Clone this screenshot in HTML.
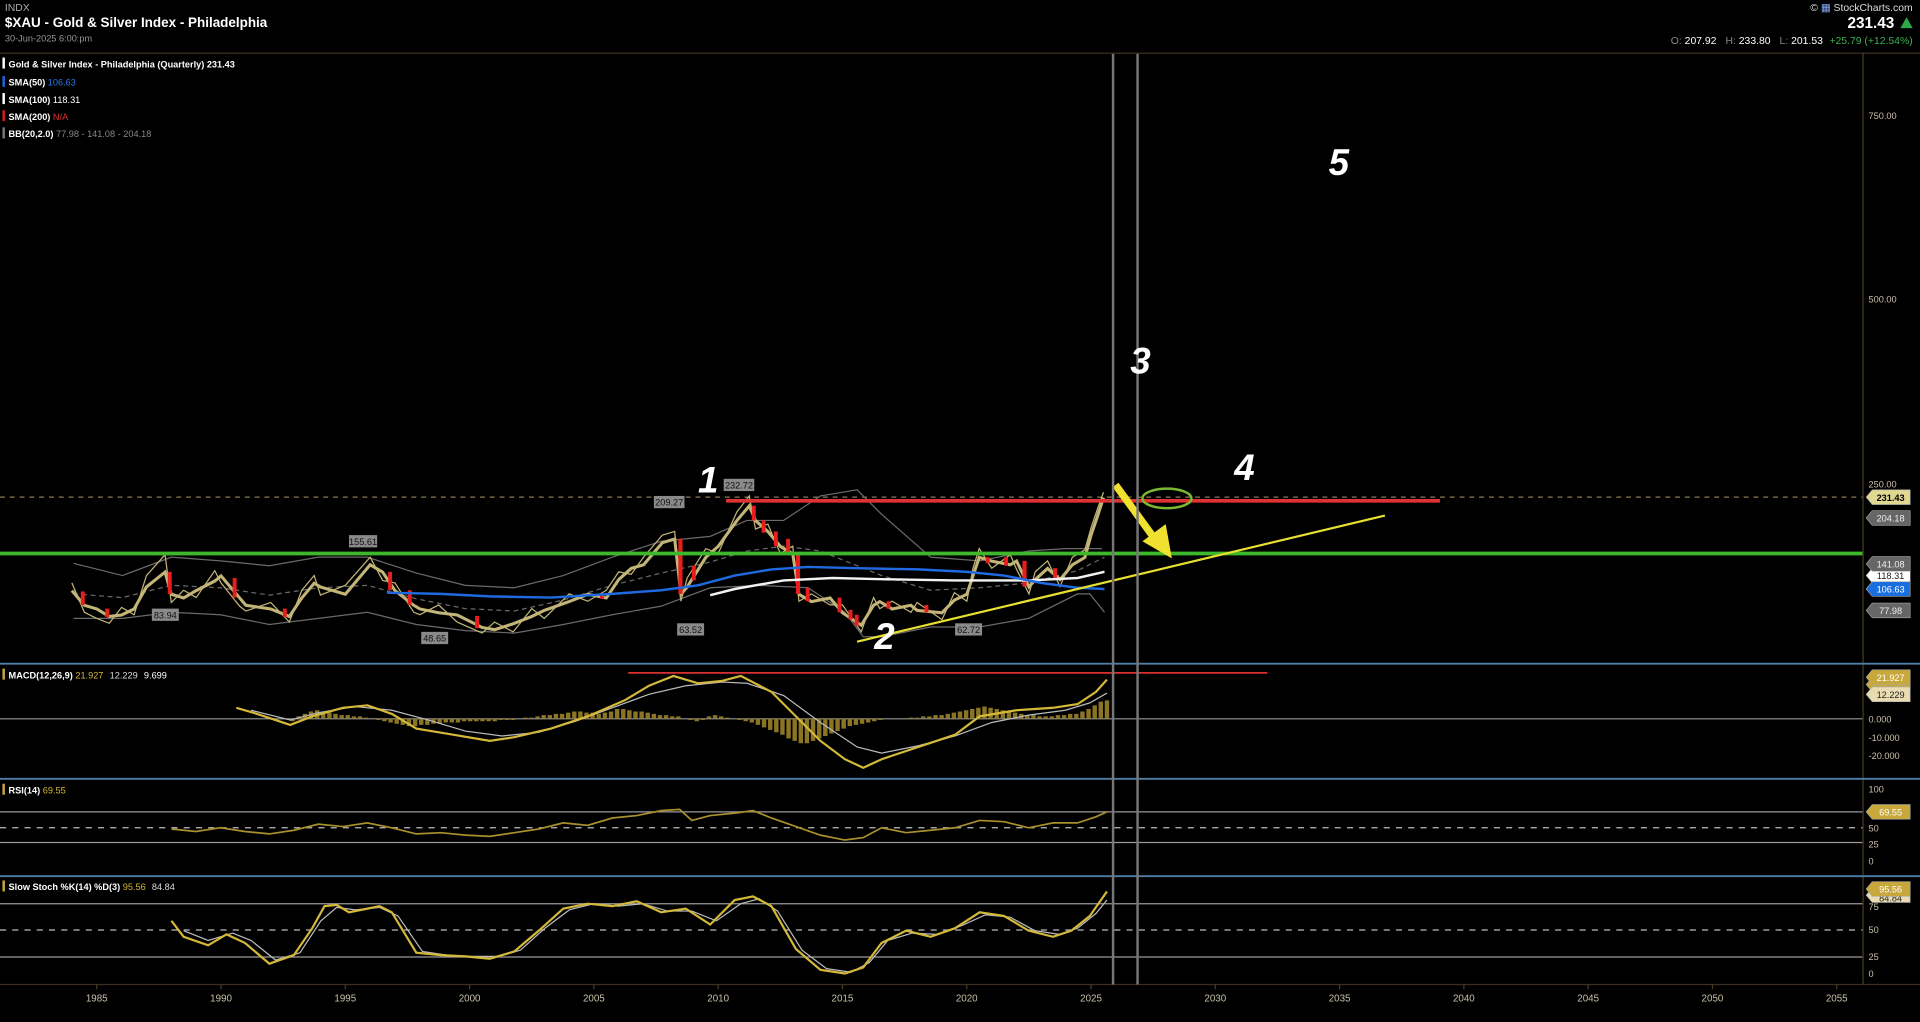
<!DOCTYPE html>
<html><head><meta charset="utf-8"><style>
html,body{margin:0;padding:0;background:#000;overflow:hidden}
svg{display:block}
text{font-family:"Liberation Sans",sans-serif}
</style></head><body>
<svg width="1920" height="1022" viewBox="0 0 1568 834.6" preserveAspectRatio="none" xmlns="http://www.w3.org/2000/svg">
<rect width="1568" height="835" fill="#000"/>
<text x="4" y="9" font-size="8.5" fill="#aaa">INDX</text>
<text x="4" y="22" font-size="11" font-weight="bold" fill="#fff">$XAU - Gold &amp; Silver Index - Philadelphia</text>
<text x="4" y="34" font-size="7.5" fill="#999">30-Jun-2025 6:00:pm</text>
<line x1="0" y1="43.5" x2="1568" y2="43.5" stroke="#3d3020"/>
<line x1="1521.5" y1="43" x2="1521.5" y2="804" stroke="#4a3c22"/>
<line x1="0" y1="804" x2="1568" y2="804" stroke="#3d3020"/>
<g font-size="7.5" font-weight="bold" fill="#fff">
<rect x="2" y="47" width="2" height="9" fill="#fff"/><text x="7" y="55">Gold &amp; Silver Index - Philadelphia (Quarterly) 231.43</text>
<rect x="2" y="62" width="2" height="9" fill="#1a66e0"/><text x="7" y="70">SMA(50) <tspan fill="#2a7ae8" font-weight="normal">106.63</tspan></text>
<rect x="2" y="76" width="2" height="9" fill="#fff"/><text x="7" y="84">SMA(100) <tspan font-weight="normal">118.31</tspan></text>
<rect x="2" y="90" width="2" height="9" fill="#d02020"/><text x="7" y="98">SMA(200) <tspan fill="#e03030" font-weight="normal">N/A</tspan></text>
<rect x="2" y="104" width="2" height="9" fill="#777"/><text x="7" y="112">BB(20,2.0) <tspan fill="#888" font-weight="normal">77.98 - 141.08 - 204.18</tspan></text>
</g>
<text x="1562" y="9" font-size="8.5" fill="#ddd" text-anchor="end">© <tspan fill="#8af">▦</tspan> StockCharts.com</text>
<text x="1547" y="23" font-size="12.5" font-weight="bold" fill="#fff" text-anchor="end">231.43</text>
<polygon points="1552,23 1562,23 1557,14" fill="#2fa84a"/>
<text x="1562" y="36" font-size="8.5" fill="#fff" text-anchor="end"><tspan fill="#888">O:</tspan> 207.92 <tspan dx="5" fill="#888">H:</tspan> 233.80 <tspan dx="5" fill="#888">L:</tspan> 201.53 <tspan dx="3" fill="#3cb050">+25.79 (+12.54%)</tspan></text>

<g stroke="#4f7ea6" stroke-width="1.5">
<line x1="0" y1="542" x2="1568" y2="542"/><line x1="0" y1="636" x2="1568" y2="636"/><line x1="0" y1="715.5" x2="1568" y2="715.5"/>
</g>
<g stroke="#999">
<line x1="0" y1="587" x2="1521" y2="587"/>
<line x1="0" y1="663" x2="1521" y2="663"/><line x1="0" y1="688" x2="1521" y2="688"/>
<line x1="0" y1="738" x2="1521" y2="738"/><line x1="0" y1="781.5" x2="1521" y2="781.5"/>
</g>
<g stroke="#bbb" stroke-dasharray="5,5">
<line x1="0" y1="676" x2="1521" y2="676"/><line x1="0" y1="759.5" x2="1521" y2="759.5"/>
</g>
<line x1="0" y1="406" x2="1521" y2="406" stroke="#8a7a50" stroke-dasharray="4,4"/>

<!-- Bollinger -->
<g fill="none" stroke="#6a6a6a" stroke-width="1">
<polyline points="60,460 100,470 140,455 180,458 220,462 260,455 300,455 340,468 380,478 420,480 460,470 500,455 540,442 580,438 610,425 640,425 670,405 700,400 720,420 760,455 800,458 840,450 870,448 900,448"/>
<polyline points="60,505 100,505 140,500 180,502 220,510 260,505 300,500 340,510 380,515 420,517 460,510 500,502 540,495 580,480 620,478 660,480 690,500 705,520 720,520 760,512 800,512 840,505 880,485 890,485 902,500"/>
<polyline stroke-dasharray="4,3" points="60,485 100,488 140,478 180,480 220,486 260,480 300,478 340,489 380,497 420,499 460,490 500,478 540,468 580,459 610,450 640,446 670,450 700,462 720,470 760,482 800,480 840,476 880,466 902,455"/>
</g>
<!-- price: wicks + close line -->
<polyline fill="none" stroke="#c2b577" stroke-width="1" points="58.7,476 68.9,500 79,505 89.2,509 99.3,496 109.5,502 119.6,470 134.8,453 139.9,492 150,482 160.2,488 175.4,466 180.5,476 195.7,495 200.8,499 221.1,492 236.3,508 246.5,482 256.6,470 261.7,486 282,478 302.3,455 312.5,474 322.6,476 337.9,500 342.9,502 358.2,494 373.4,508 393.7,517 403.9,508 419.1,516 434.3,497 444.5,505 464.8,485 480,491 495.2,482 505.3,467 515.5,469 525.6,455 540.9,437 551,434 556.1,491 561.2,472 576.4,448 586.5,452 601.8,418 611.9,405 617,432 627.1,428 637.3,452 647.4,446 652.5,491 662.7,485 677.9,494 688,494 703.3,516 713.4,488 718.5,497 728.6,491 743.9,500 749,492 769.3,506 779.4,484 789.6,491 794.6,464 799.7,448 809.9,464 825.1,453 830.2,465 840.3,485 845.4,467 855.5,458 865.7,479 875.8,455 886,449 891,431 896.1,416 901.2,402"/>
<polyline fill="none" stroke="#c2b577" stroke-width="2.5" points="58.7,482.3 68.9,494.3 79,497.3 89.2,503.4 99.3,502.2 109.5,497.3 119.6,479.3 134.8,467.2 139.9,485.3 150,488.3 160.2,482.3 175.4,474.5 180.5,470.3 195.7,488.3 200.8,494.3 221.1,497.3 236.3,503.4 246.5,488.3 256.6,476.3 261.7,479.3 282,485.3 302.3,461.2 312.5,467.2 322.6,482.3 337.9,494.3 342.9,497.3 358.2,500.4 373.4,502.2 393.7,512.4 403.9,514.2 419.1,509.4 434.3,503.4 444.5,498.5 464.8,491.3 480,485.3 495.2,488.3 505.3,473.3 515.5,464.2 525.6,461.2 540.9,443.2 551,440.2 556.1,485.3 561.2,479.3 576.4,455.2 586.5,446.2 601.8,425.1 611.9,413.1 617,425.1 627.1,434.1 637.3,446.2 647.4,452.2 652.5,485.3 662.7,491.3 677.9,488.3 688,500.4 703.3,510.6 713.4,494.3 718.5,491.3 728.6,497.3 743.9,494.3 749,498.5 769.3,500.4 779.4,490.1 789.6,485.3 794.6,470.3 799.7,455.2 809.9,458.2 825.1,461.2 830.2,458.2 840.3,479.3 845.4,473.3 855.5,464.2 865.7,473.3 875.8,461.2 886,455.2 891,437.1 896.1,422.1 901.2,406.4"/>
<g fill="#e81e1e">
<rect x="66" y="483" width="3.2" height="11"/><rect x="86" y="497" width="3.2" height="7"/><rect x="137" y="467" width="3.2" height="18"/>
<rect x="190" y="472" width="3.2" height="16"/><rect x="231" y="497" width="3.2" height="7"/><rect x="317" y="467" width="3.2" height="15"/>
<rect x="333" y="482" width="3.2" height="12"/><rect x="388" y="503" width="3.2" height="10"/><rect x="490" y="485" width="3.2" height="4"/>
<rect x="554" y="440" width="3.4" height="45"/><rect x="565" y="462" width="3.2" height="12"/><rect x="614" y="413" width="3.2" height="12"/>
<rect x="622" y="425" width="3.2" height="10"/><rect x="632" y="434" width="3.2" height="12"/><rect x="642" y="440" width="3.2" height="12"/>
<rect x="650" y="452" width="3.4" height="33"/><rect x="658" y="480" width="3.2" height="11"/><rect x="684" y="488" width="3.2" height="12"/>
<rect x="693" y="498" width="3.2" height="8"/><rect x="698" y="502" width="3.2" height="9"/><rect x="724" y="491" width="3.2" height="6"/>
<rect x="755" y="494" width="3.2" height="6"/><rect x="805" y="455" width="3.2" height="5"/><rect x="820" y="455" width="3.2" height="7"/>
<rect x="835" y="458" width="3.4" height="21"/><rect x="860" y="464" width="3.2" height="9"/>
</g>
<polyline fill="none" stroke="#f2f2f2" stroke-width="2" points="580,486 600,481 640,474 680,472 720,473 780,474 840,474 880,472 902,467"/>
<polyline fill="none" stroke="#1f6ae0" stroke-width="2" points="316,484 360,485 400,487 450,488 500,485 540,482 570,478 600,470 630,465 660,463 700,464 750,465 790,467 820,470 850,476 880,480 902,481"/>

<!-- MACD -->
<path fill="none" stroke="#8a7525" stroke-width="3.6" d="M239 587v2M244 587v-2M249 587v-4M254 587v-6M259 587v-7M264 587v-6M269 587v-5M274 587v-4M279 587v-3M284 587v-3M289 587v-2M294 587v-2M299 587v-1M309 587v1M314 587v2M319 587v3M324 587v4M329 587v5M334 587v6M339 587v6M344 587v5M349 587v5M354 587v4M359 587v4M364 587v3M369 587v3M374 587v3M379 587v2M384 587v2M389 587v2M394 587v2M399 587v2M404 587v2M409 587v1M414 587v1M419 587v1M429 587v-1M434 587v-1M439 587v-2M444 587v-3M449 587v-3M454 587v-4M459 587v-4M464 587v-5M469 587v-6M474 587v-6M479 587v-5M484 587v-5M489 587v-4M494 587v-5M499 587v-6M504 587v-8M509 587v-8M514 587v-7M519 587v-6M524 587v-6M529 587v-5M534 587v-4M539 587v-3M544 587v-3M549 587v-2M554 587v-2M564 587v1M569 587v2M574 587v1M579 587v-2M584 587v-3M589 587v-2M594 587v-1M604 587v1M609 587v2M614 587v3M619 587v5M624 587v7M629 587v9M634 587v11M639 587v13M644 587v16M649 587v18M654 587v20M659 587v20M664 587v18M669 587v16M674 587v14M679 587v12M684 587v10M689 587v8M694 587v6M699 587v5M704 587v4M709 587v3M714 587v2M719 587v1M744 587v-1M749 587v-1M754 587v-2M759 587v-2M764 587v-3M769 587v-3M774 587v-4M779 587v-5M784 587v-6M789 587v-7M794 587v-8M799 587v-9M804 587v-10M809 587v-9M814 587v-8M819 587v-7M824 587v-6M829 587v-5M834 587v-4M839 587v-3M844 587v-3M849 587v-2M854 587v-2M859 587v-2M864 587v-3M869 587v-3M874 587v-4M879 587v-4M884 587v-6M889 587v-8M894 587v-11M899 587v-14M904 587v-15"/>
<polyline fill="none" stroke="#bbb" stroke-width="1" points="205,580 237,588 260,582 290,577 320,580 350,588 380,597 410,601 440,598 470,589 500,578 530,567 560,560 590,557 610,558 640,568 670,590 700,610 720,615 750,609 780,601 810,590 840,584 870,580 890,574 904,566"/>
<polyline fill="none" stroke="#d4b83a" stroke-width="1.8" points="193,578 210,583 237,592 255,585 280,578 300,576 320,583 340,595 370,600 400,605 420,602 450,595 480,585 510,572 530,560 550,552 570,558 590,556 605,552 630,565 650,585 670,605 690,620 705,627 720,620 750,610 780,600 800,585 830,580 860,578 880,575 895,565 904,555"/>

<!-- RSI -->
<polyline fill="none" stroke="#a8902c" stroke-width="1.4" points="140,677 160,679 180,676 200,679 220,681 240,678 260,673 280,675 300,672 320,676 340,681 360,680 380,682 400,683 420,680 440,677 460,672 480,674 500,668 520,666 540,662 555,661 565,670 580,666 600,664 615,662 630,668 650,675 670,682 690,686 705,684 720,676 740,680 760,678 780,676 800,670 820,671 840,676 860,672 880,672 895,667 904,663"/>
<!-- Stoch -->
<polyline fill="none" stroke="#bbb" stroke-width="1" points="150,760 170,768 190,762 205,768 225,784 245,778 262,752 275,741 290,743 310,741 325,748 345,777 365,780 385,781 405,781 425,776 445,758 465,743 485,738 505,740 525,738 545,744 565,744 585,752 605,738 620,734 635,744 655,776 675,791 695,794 710,786 725,768 745,762 765,763 785,756 805,747 825,749 845,760 865,763 880,758 895,746 904,735"/>
<polyline fill="none" stroke="#d4b83a" stroke-width="1.8" points="140,752 150,765 170,772 185,763 200,770 220,787 240,780 255,758 265,740 275,739 285,745 300,742 310,740 320,745 340,778 360,780 380,781 400,783 420,777 440,760 460,742 480,738 500,740 520,736 540,745 560,742 580,755 600,735 615,732 630,740 650,775 670,792 690,795 705,790 720,770 740,760 760,765 780,758 800,745 820,748 840,760 860,765 875,760 890,748 904,728"/>

<!-- annotations -->
<line x1="0" y1="452" x2="1521" y2="452" stroke="#3cb82a" stroke-width="3"/>
<line x1="593" y1="409" x2="1176" y2="409" stroke="#e03232" stroke-width="3"/>
<line x1="513" y1="549.5" x2="1035" y2="549.5" stroke="#d83030" stroke-width="1.5"/>
<line x1="700" y1="524" x2="1131" y2="421" stroke="#e8e030" stroke-width="1.8"/>
<line x1="911" y1="396" x2="943" y2="440" stroke="#f0e030" stroke-width="6"/>
<polygon points="933,442 952,428 957,456" fill="#f0e030"/>
<ellipse cx="953" cy="407" rx="20" ry="8" fill="none" stroke="#7ab830" stroke-width="2"/>
<line x1="909" y1="44" x2="909" y2="804" stroke="#777" stroke-width="2"/>
<line x1="929" y1="44" x2="929" y2="804" stroke="#777" stroke-width="2"/>

<g font-size="30" font-weight="bold" font-style="italic" fill="#fff">
<text x="570" y="402">1</text><text x="714" y="530">2</text><text x="923" y="305">3</text><text x="1008" y="392">4</text><text x="1085" y="143">5</text>
</g>
<g font-size="7.5" fill="#111" text-anchor="middle">
<rect x="285" y="437" width="23" height="10" fill="#8a8a8a"/><text x="296.5" y="445">155.61</text>
<rect x="534" y="405" width="25" height="10" fill="#8a8a8a"/><text x="546.5" y="413">209.27</text>
<rect x="591" y="391" width="25" height="10" fill="#8a8a8a"/><text x="603.5" y="399">232.72</text>
<rect x="124" y="497" width="22" height="10" fill="#8a8a8a"/><text x="135" y="505">83.94</text>
<rect x="344" y="516" width="22" height="10" fill="#8a8a8a"/><text x="355" y="524">48.65</text>
<rect x="553" y="509" width="22" height="10" fill="#8a8a8a"/><text x="564" y="517">63.52</text>
<rect x="780" y="509" width="22" height="10" fill="#8a8a8a"/><text x="791" y="517">62.72</text>
</g>

<g font-size="7.5" font-weight="bold" fill="#fff">
<rect x="2" y="546" width="2" height="9" fill="#c8a83a"/><text x="7" y="554">MACD(12,26,9) <tspan fill="#d4b83a" font-weight="normal">21.927</tspan> <tspan fill="#ddd" font-weight="normal" dx="3">12.229</tspan> <tspan font-weight="normal" dx="3">9.699</tspan></text>
<rect x="2" y="640" width="2" height="9" fill="#c8a83a"/><text x="7" y="648">RSI(14) <tspan fill="#d4b83a" font-weight="normal">69.55</tspan></text>
<rect x="2" y="719" width="2" height="9" fill="#c8a83a"/><text x="7" y="727">Slow Stoch %K(14) %D(3) <tspan fill="#d4b83a" font-weight="normal">95.56</tspan> <tspan fill="#ddd" font-weight="normal" dx="3">84.84</tspan></text>
</g>

<g font-size="7.5" fill="#c8c0a8">
<text x="1526" y="97">750.00</text><text x="1526" y="247">500.00</text><text x="1526" y="398">250.00</text>
<text x="1526" y="590">0.000</text><text x="1526" y="605">-10.000</text><text x="1526" y="620">-20.000</text>
<text x="1526" y="647">100</text><text x="1526" y="679">50</text><text x="1526" y="692">25</text><text x="1526" y="706">0</text>
<text x="1526" y="743">75</text><text x="1526" y="762">50</text><text x="1526" y="784">25</text><text x="1526" y="798">0</text>
</g>

<!-- tags -->
<g font-size="7.5" text-anchor="middle" stroke-width="0.5">
<polygon points="1524,470 1529,464 1560,464 1560,476 1529,476" fill="#fff" stroke="#aaa"/><text x="1544" y="473" fill="#222">118.31</text>
<polygon points="1524,423 1529,417 1560,417 1560,429 1529,429" fill="#666" stroke="#aaa"/><text x="1544" y="426" fill="#eee">204.18</text>
<polygon points="1524,460.5 1529,454.5 1560,454.5 1560,466.5 1529,466.5" fill="#666" stroke="#aaa"/><text x="1544" y="463.5" fill="#eee">141.08</text>
<polygon points="1524,481 1529,475 1560,475 1560,487 1529,487" fill="#1a6fe0" stroke="#aaa"/><text x="1544" y="484" fill="#fff">106.63</text>
<polygon points="1524,498.5 1529,492.5 1560,492.5 1560,504.5 1529,504.5" fill="#666" stroke="#aaa"/><text x="1544" y="501.5" fill="#eee">77.98</text>
<polygon points="1524,406 1529,400 1560,400 1560,412 1529,412" fill="#e0d890" stroke="#aaa"/><text x="1544" y="409" fill="#000" font-weight="bold">231.43</text>
<polygon points="1524,559 1529,553 1560,553 1560,565 1529,565" fill="#c8a83a" stroke="#aaa"/>
<polygon points="1524,553 1529,547 1560,547 1560,559 1529,559" fill="#c8a83a" stroke="#aaa"/><text x="1544" y="556" fill="#fff">21.927</text>
<polygon points="1524,567 1529,561 1560,561 1560,573 1529,573" fill="#e8dcb0" stroke="#aaa"/><text x="1544" y="570" fill="#222">12.229</text>
<polygon points="1524,663 1529,657 1560,657 1560,669 1529,669" fill="#c8a83a" stroke="#aaa"/><text x="1544" y="666" fill="#fff">69.55</text>
<polygon points="1524,731 1529,725 1560,725 1560,737 1529,737" fill="#e8dcb0" stroke="#aaa"/><text x="1544" y="736" fill="#222">84.84</text>
<polygon points="1524,726 1529,720 1560,720 1560,732 1529,732" fill="#c8a83a" stroke="#aaa"/><text x="1544" y="729" fill="#fff">95.56</text>
</g>

<g font-size="8" fill="#c8c0a8" text-anchor="middle">
<text x="79" y="818">1985</text><text x="180.5" y="818">1990</text><text x="282" y="818">1995</text><text x="383.5" y="818">2000</text><text x="485" y="818">2005</text><text x="586.5" y="818">2010</text><text x="688" y="818">2015</text><text x="789.5" y="818">2020</text><text x="891" y="818">2025</text><text x="992.5" y="818">2030</text><text x="1094" y="818">2035</text><text x="1195.5" y="818">2040</text><text x="1297" y="818">2045</text><text x="1398.5" y="818">2050</text><text x="1500" y="818">2055</text>
</g>
<g stroke="#4a3c22">
<path d="M79 804v4M180.5 804v4M282 804v4M383.5 804v4M485 804v4M586.5 804v4M688 804v4M789.5 804v4M891 804v4M992.5 804v4M1094 804v4M1195.5 804v4M1297 804v4M1398.5 804v4M1500 804v4"/>
</g>
</svg>
</body></html>
